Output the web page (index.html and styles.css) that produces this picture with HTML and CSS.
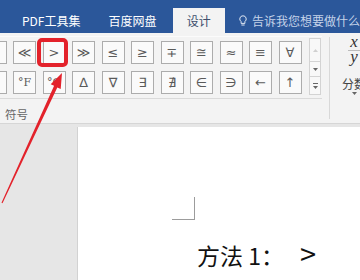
FILE: index.html
```html
<!DOCTYPE html>
<html lang="zh-CN">
<head>
    <meta charset="UTF-8">
    <meta name="viewport" content="width=device-width, initial-scale=1.0">
    <title>设计 - 符号</title>
    <link rel="stylesheet" href="styles.css">
</head>
<body>
    <div class="titlebar">
        <div class="tab">PDF工具集</div>
        <div class="tab">百度网盘</div>
        <div class="tab tab-active">设计</div>
        <div class="tell-me">
            <svg class="bulb" width="8" height="11" viewBox="0 0 8 11">
                <path d="M4 0.8a3.2 3.2 0 0 0-1.9 5.8v1.8h3.8V6.6A3.2 3.2 0 0 0 4 0.8z M2.4 10h3.2" fill="none" stroke="#dfe7f3" stroke-width="1"/>
            </svg>
            <span>告诉我您想要做什么</span>
        </div>
    </div>

    <div class="ribbon">
        <div class="group-symbols">
            <div class="gallery">
                <div class="symbol-grid">
                    <div class="symbol">&lt;</div>
                    <div class="symbol">≪</div>
                    <div class="symbol">&gt;</div>
                    <div class="symbol">≫</div>
                    <div class="symbol">≤</div>
                    <div class="symbol">≥</div>
                    <div class="symbol">∓</div>
                    <div class="symbol">≅</div>
                    <div class="symbol">≈</div>
                    <div class="symbol">≡</div>
                    <div class="symbol">∀</div>
                    <div class="symbol">°</div>
                    <div class="symbol small">°F</div>
                    <div class="symbol small">°C</div>
                    <div class="symbol">∆</div>
                    <div class="symbol">∇</div>
                    <div class="symbol">∃</div>
                    <div class="symbol">∄</div>
                    <div class="symbol">∈</div>
                    <div class="symbol">∋</div>
                    <div class="symbol">←</div>
                    <div class="symbol">↑</div>
                </div>
                <div class="gallery-scroll">
                    <div class="scroll-btn scroll-up">
                        <svg width="5" height="3" viewBox="0 0 5 3"><path d="M0 3L2.5 0L5 3z" fill="#d0d0d0"/></svg>
                    </div>
                    <div class="scroll-btn scroll-down">
                        <svg width="5" height="3" viewBox="0 0 5 3"><path d="M0 0L2.5 3L5 0z" fill="#666"/></svg>
                    </div>
                    <div class="scroll-btn scroll-more">
                        <svg width="5" height="6" viewBox="0 0 5 6"><path d="M0 0.5H5" stroke="#666" stroke-width="1"/><path d="M0 3L2.5 6L5 3z" fill="#666"/></svg>
                    </div>
                </div>
            </div>
            <div class="group-label">符号</div>
        </div>
        <div class="group-sep"></div>
        <div class="fraction-btn">
            <div class="frac-num">x</div>
            <div class="frac-line"></div>
            <div class="frac-den">y</div>
            <div class="frac-label">分数</div>
            <svg width="5" height="3" viewBox="0 0 5 3"><path d="M0 0L2.5 3L5 0z" fill="#666"/></svg>
        </div>
    </div>

    <div class="workspace">
        <div class="page">
            <div class="crop-mark"></div>
            <p class="doc-text">方法 1：<span class="doc-symbol">&gt;</span></p>
        </div>
    </div>

    <svg class="annotation" width="360" height="280" viewBox="0 0 360 280">
        <rect x="39" y="40" width="27" height="25" rx="3" fill="none" stroke="#e3222b" stroke-width="4"/>
        <polygon points="62,73 60.7,88.9 57.3,87.4 2.5,203.2 1.5,202.8 54.1,85.8 50.7,84.3" fill="#e3222b"/>
    </svg>
</body>
</html>
```

FILE: styles.css
```css
* {
    margin: 0;
    padding: 0;
    box-sizing: border-box;
}

html {
    overflow: hidden;
}

body {
    width: 360px;
    height: 280px;
    overflow: hidden;
    position: relative;
    font-family: "Noto Sans CJK SC", "Noto Sans", sans-serif;
    background: #e6e6e6;
}

.titlebar {
    height: 33px;
    background: #2b579a;
    display: flex;
    align-items: flex-end;
    padding-left: 8px;
    white-space: nowrap;
}

.tab {
    height: 25px;
    line-height: 25px;
    padding: 0 14px;
    font-size: 12px;
    color: #fff;
}

.tab-active {
    margin-left: 2px;
    width: 60px;
    padding: 0;
    text-align: center;
    background: #f3f3f3;
    color: #3d4f6c;
}

.tell-me {
    height: 25px;
    display: flex;
    align-items: center;
    gap: 5px;
    margin-left: 14px;
    font-size: 12px;
    color: #c4d2e8;
}

.ribbon {
    height: 91px;
    background: #f3f3f3;
    border-bottom: 1px solid #d6d6d6;
    display: flex;
}

.group-symbols {
    width: 322px;
    flex-shrink: 0;
    padding-top: 3px;
}

.gallery {
    height: 63px;
    display: flex;
    padding-top: 5px;
    border-top: 1px solid #fbfbfb;
    border-bottom: 1px solid #dadada;
}

.symbol-grid {
    display: grid;
    grid-template-columns: repeat(11, 23px);
    grid-auto-rows: 23px;
    column-gap: 6.5px;
    row-gap: 7px;
    margin-left: -16.5px;
    margin-top: -1px;
}

.symbol {
    border: 1px solid #acacac;
    background: #fafafa;
    display: flex;
    align-items: center;
    justify-content: center;
    font-family: "DejaVu Sans", sans-serif;
    font-size: 13px;
    color: #5a5a5a;
}

.symbol.small {
    font-family: "DejaVu Serif", serif;
    font-size: 11px;
}

.gallery-scroll {
    width: 12px;
    margin-left: 7.5px;
    margin-top: -4px;
    display: flex;
    flex-direction: column;
}

.scroll-btn {
    border: 1px solid #d3d3d3;
    background: #f8f8f8;
    display: flex;
    align-items: center;
    justify-content: center;
}

.scroll-btn + .scroll-btn {
    border-top: none;
}

.scroll-up {
    height: 24px;
}

.scroll-down {
    height: 15px;
}

.scroll-more {
    height: 18px;
}

.group-label {
    margin-top: 7px;
    padding-left: 5px;
    line-height: 16px;
    font-size: 11.5px;
    color: #666;
}

.group-sep {
    width: 1px;
    height: 82px;
    margin: 4px 0 0 7px;
    background: #d8d8d8;
    flex-shrink: 0;
}

.fraction-btn {
    width: 24px;
    margin-left: 12px;
    padding-top: 3px;
    display: flex;
    flex-direction: column;
    align-items: center;
    flex-shrink: 0;
    color: #333;
}

.frac-num,
.frac-den {
    height: 12px;
    font-family: "Liberation Serif", serif;
    font-style: italic;
    font-size: 17px;
    line-height: 12px;
}

.frac-line {
    width: 12px;
    height: 1px;
    margin-top: 2px;
    background: #bbb;
}

.frac-label {
    margin-top: 13px;
    font-size: 12px;
    line-height: 16px;
    white-space: nowrap;
    color: #444;
}

.workspace {
    height: 156px;
    overflow: hidden;
    padding: 3px 0 0 77px;
}

.page {
    height: 153px;
    background: #fff;
    border-left: 1px solid #d2d2d2;
    padding-top: 70px;
}

.crop-mark {
    width: 23px;
    height: 23px;
    margin-left: 94px;
    border-right: 1px solid #9c9c9c;
    border-bottom: 1px solid #9c9c9c;
}

.doc-text {
    margin: 17px 0 0 119px;
    font-size: 23px;
    line-height: 36px;
    color: #111;
    white-space: nowrap;
}

.doc-symbol {
    margin-left: 16px;
    font-size: 29px;
    line-height: 1;
}

.annotation {
    position: absolute;
    top: 0;
    left: 0;
    pointer-events: none;
}
```
